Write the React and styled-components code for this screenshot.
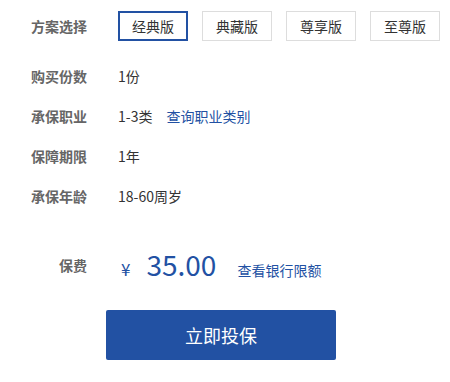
import React, { useState } from "react";
import styled, { createGlobalStyle } from "styled-components";

const Global = createGlobalStyle`
  html, body { margin: 0; padding: 0; background: #fff; }
  body { font-family: "Noto Sans CJK SC", "Microsoft YaHei", sans-serif; }
`;

const Form = styled.div`
  width: 450px;
  padding-top: 11px;
  box-sizing: border-box;
`;

const Row = styled.div`
  display: flex;
  align-items: center;
  height: ${(p) => p.$h || 40}px;
  margin-top: ${(p) => p.$mt || 0}px;
`;

const Label = styled.div`
  width: 87px;
  margin-right: 31px;
  text-align: right;
  font-size: 14px;
  font-weight: bold;
  color: #666;
  line-height: 20px;
  flex-shrink: 0;
  white-space: nowrap;
`;

const Value = styled.div`
  font-size: 14px;
  color: #333;
  line-height: 20px;
  display: flex;
  align-items: baseline;
`;

const Link = styled.a`
  color: #2251a3;
  font-size: 14px;
  text-decoration: none;
  margin-left: ${(p) => p.$ml || 0}px;
  cursor: pointer;
`;

const Options = styled.div`
  display: flex;
  gap: 14px;
`;

const Option = styled.button`
  box-sizing: border-box;
  width: 70px;
  height: 30px;
  padding: 0;
  background: #fff;
  font-family: inherit;
  font-size: 14px;
  color: #333;
  border: ${(p) => (p.$active ? "2px solid #2251a3" : "1px solid #ddd")};
  cursor: pointer;
`;

const Price = styled.div`
  display: flex;
  align-items: baseline;
  color: #2251a3;
  line-height: 40px;
  margin-top: 3px;
`;

const Yen = styled.span`
  font-size: 17px;
  margin-left: 3px;
  margin-right: 16px;
`;

const Amount = styled.span`
  font-size: 28px;
  margin-right: 21px;
`;

const Submit = styled.button`
  display: block;
  margin: 25px 0 0 106px;
  width: 230px;
  height: 50px;
  border: none;
  border-radius: 2px;
  background: #2251a3;
  color: #fff;
  font-family: inherit;
  font-size: 18px;
  cursor: pointer;
`;

const plans = ["经典版", "典藏版", "尊享版", "至尊版"];

export default function App() {
  const [plan, setPlan] = useState(0);
  return (
    <>
      <Global />
      <Form>
        <Row $h={30}>
          <Label>方案选择</Label>
          <Options>
            {plans.map((p, i) => (
              <Option key={p} $active={i === plan} onClick={() => setPlan(i)}>
                {p}
              </Option>
            ))}
          </Options>
        </Row>
        <Row $mt={15}>
          <Label>购买份数</Label>
          <Value>1份</Value>
        </Row>
        <Row>
          <Label>承保职业</Label>
          <Value>
            1-3类<Link $ml={14}>查询职业类别</Link>
          </Value>
        </Row>
        <Row>
          <Label>保障期限</Label>
          <Value>1年</Value>
        </Row>
        <Row>
          <Label>承保年龄</Label>
          <Value>18-60周岁</Value>
        </Row>
        <Row $mt={29}>
          <Label>保费</Label>
          <Price>
            <Yen>¥</Yen>
            <Amount>35.00</Amount>
            <Link>查看银行限额</Link>
          </Price>
        </Row>
        <Submit>立即投保</Submit>
      </Form>
    </>
  );
}
